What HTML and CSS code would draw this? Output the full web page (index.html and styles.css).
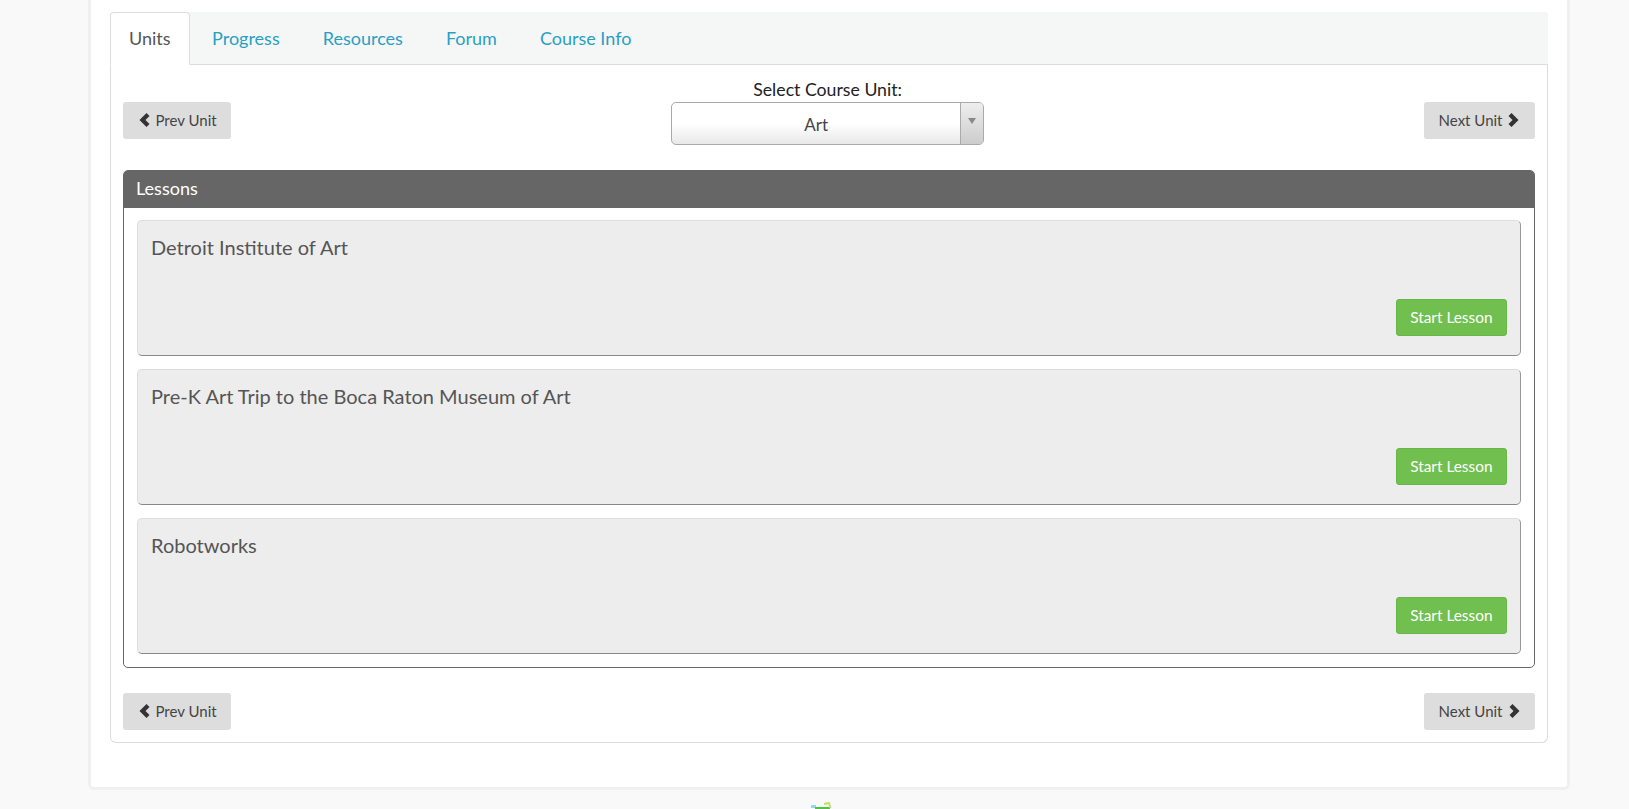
FILE: index.html
```html
<!DOCTYPE html>
<html lang="en">
<head>
    <meta charset="UTF-8">
    <title>Course Units</title>
    <link rel="stylesheet" href="styles.css">
</head>
<body>

    <div class="course-card">
        <ul class="tabs">
            <li class="tab active">Units</li>
            <li class="tab">Progress</li>
            <li class="tab">Resources</li>
            <li class="tab">Forum</li>
            <li class="tab">Course Info</li>
        </ul>

        <div class="tab-content">
            <div class="unit-nav">
                <a class="nav-button prev">
                    <svg class="chevron" viewBox="0 0 12 14"><polygon points="8.500,0 11.500,3 7.500,7 11.500,11 8.500,14 1.500,7"></polygon></svg>
                    Prev Unit
                </a>
                <div class="unit-select">
                    <label>Select Course Unit:</label>
                    <div class="select-box">
                        <span class="select-value">Art</span>
                        <span class="select-arrow"></span>
                    </div>
                </div>
                <a class="nav-button next">
                    Next Unit
                    <svg class="chevron" viewBox="0 0 12 14"><polygon points="3.500,0 0.500,3 4.500,7 0.500,11 3.500,14 10.500,7"></polygon></svg>
                </a>
            </div>

            <div class="lessons">
                <div class="lessons-header">Lessons</div>
                <div class="lessons-body">
                    <div class="lesson">
                        <div class="lesson-title">Detroit Institute of Art</div>
                        <a class="start-button">Start Lesson</a>
                    </div>
                    <div class="lesson">
                        <div class="lesson-title">Pre-K Art Trip to the Boca Raton Museum of Art</div>
                        <a class="start-button">Start Lesson</a>
                    </div>
                    <div class="lesson">
                        <div class="lesson-title">Robotworks</div>
                        <a class="start-button">Start Lesson</a>
                    </div>
                </div>
            </div>

            <div class="unit-nav bottom">
                <a class="nav-button prev">
                    <svg class="chevron" viewBox="0 0 12 14"><polygon points="8.500,0 11.500,3 7.500,7 11.500,11 8.500,14 1.500,7"></polygon></svg>
                    Prev Unit
                </a>
                <a class="nav-button next">
                    Next Unit
                    <svg class="chevron" viewBox="0 0 12 14"><polygon points="3.500,0 0.500,3 4.500,7 0.500,11 3.500,14 10.500,7"></polygon></svg>
                </a>
            </div>
        </div>
    </div>

    <!-- top of the footer logo, cut off by the window -->
    <svg class="footer-logo" width="24" height="12" viewBox="0 0 24 12">
        <rect x="1" y="4" width="5" height="3" fill="#8fdaf6"></rect>
        <rect x="5" y="6" width="15" height="2" fill="#4fc04a"></rect>
        <path d="M14 3l5-1 1.500 5" fill="none" stroke="#bfe26a" stroke-width="2"></path>
    </svg>

</body>
</html>
```

FILE: styles.css
```css
* {
    margin: 0;
    padding: 0;
    box-sizing: border-box;
    font-family: "Lato", "Open Sans", sans-serif;
}

html, body {
    height: 809px;
    overflow: hidden;
}

body {
    background-color: #f9f9f9;
    color: #444;
    font-size: 15px;
}

.course-card {
    width: 1482px;
    height: 790px;
    margin-left: 88px;
    padding: 12px 19px 0;
    background-color: white;
    border: 3px solid #f0f0f0;
    border-top: none;
    border-radius: 0 0 6px 6px;
}

.tabs {
    display: flex;
    height: 53px;
    list-style: none;
    background-color: #f5f7f6;
    border-bottom: 1px solid #ddd;
    border-radius: 4px 4px 0 0;
}

.tab {
    padding: 14px 19.5px 0 21.5px;
    font-size: 18px;
    color: #2a9fc4;
    border: 1px solid transparent;
}

.tab.active {
    height: 53px;
    padding: 14px 18px 0;
    color: #555;
    background-color: white;
    border-color: #ddd;
    border-bottom-color: white;
    border-radius: 4px 4px 0 0;
}

.tab-content {
    height: 678px;
    padding: 13px 12px 12px;
    border: 1px solid #ddd;
    border-top: none;
    border-radius: 0 0 6px 6px;
}

.unit-nav {
    display: flex;
    justify-content: space-between;
    align-items: flex-start;
    margin-bottom: 25px;
}

.unit-nav .nav-button {
    margin-top: 24px;
}

.unit-nav.bottom {
    margin-top: 25px;
    margin-bottom: 0;
}

.unit-nav.bottom .nav-button {
    margin-top: 0;
}

.nav-button {
    display: flex;
    align-items: center;
    gap: 6px;
    height: 37px;
    padding: 0 14.5px 2px;
    font-size: 15px;
    color: #444;
    background-color: #ddd;
    border-radius: 3px;
}

.chevron {
    width: 12px;
    height: 14px;
    fill: #333;
}

.unit-select {
    width: 313px;
}

.unit-select label {
    display: block;
    height: 24px;
    font-size: 17.7px;
    line-height: 24px;
    text-align: center;
    color: #222;
}

.select-box {
    display: flex;
    height: 43px;
    background: linear-gradient(#fff 50%, #e8e8e8);
    border: 1px solid #aaa;
    border-radius: 5px;
    overflow: hidden;
}

.select-value {
    flex: 1;
    font-size: 17px;
    line-height: 43px;
    text-align: center;
    color: #444;
}

.select-arrow {
    position: relative;
    width: 23px;
    background: linear-gradient(#eee, #ccc);
    border-left: 1px solid #aaa;
}

.select-arrow::after {
    content: "";
    position: absolute;
    top: 15px;
    left: 7px;
    border: 4px solid transparent;
    border-top: 6px solid #888;
}

.lessons {
    border: 1px solid #666;
    border-radius: 5px;
}

.lessons-header {
    height: 37px;
    padding-left: 12px;
    font-size: 18px;
    line-height: 35px;
    color: white;
    background-color: #666;
    border-radius: 3px 3px 0 0;
}

.lessons-body {
    display: flex;
    flex-direction: column;
    gap: 13px;
    padding: 12px 13px 13px;
}

.lesson {
    display: flex;
    flex-direction: column;
    justify-content: space-between;
    height: 136px;
    padding: 14px 13px 19px;
    background-color: #ededed;
    border: 1px solid #ddd;
    border-right-color: #999;
    border-bottom-color: #888;
    border-radius: 5px;
}

.lesson-title {
    font-size: 20px;
    color: #555;
}

.start-button {
    align-self: flex-end;
    height: 37px;
    padding: 0 13.5px;
    font-size: 15.4px;
    line-height: 34px;
    color: white;
    background-color: #70bf4f;
    border: 1px solid #68b548;
    border-radius: 3px;
}

.footer-logo {
    display: block;
    margin: 11px 0 0 810px;
}
```
